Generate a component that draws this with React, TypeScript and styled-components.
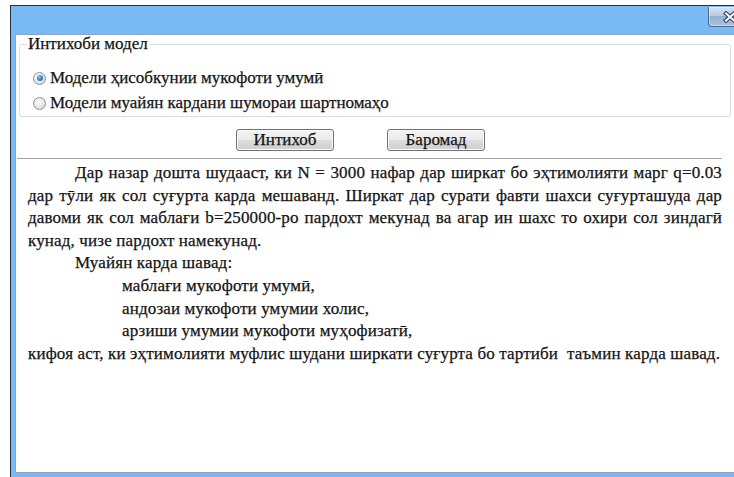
import styled, { createGlobalStyle } from "styled-components";

const GlobalStyle = createGlobalStyle`
  html, body {
    margin: 0;
    padding: 0;
    background: #ffffff;
    overflow: hidden;
  }
  body {
    width: 734px;
    height: 477px;
    font-family: "Liberation Serif", "DejaVu Serif", serif;
    font-size: 17px;
    color: #141414;
    -webkit-text-stroke: 0.25px #141414;
  }
`;

export default function App() {
  return (
    <>
      <GlobalStyle />
      <Window>
        <TitleBar>
          <CloseButton aria-label="Пӯшидан">
            <CloseGlyph />
          </CloseButton>
        </TitleBar>
        <Client>
          <ModelGroup>
            <Legend>Интихоби модел</Legend>
            <RadioRow>
              <Radio $checked />
              Модели ҳисобкунии мукофоти умумӣ
            </RadioRow>
            <RadioRow>
              <Radio />
              Модели муайян кардани шумораи шартномаҳо
            </RadioRow>
          </ModelGroup>
          <Actions>
            <PushButton>Интихоб</PushButton>
            <PushButton>Баромад</PushButton>
          </Actions>
          <TextPanel>
            <Line $indent={1} $full>
              Дар назар дошта шудааст, ки N = 3000 нафар дар ширкат бо эҳтимолияти марг q=0.03
            </Line>
            <Line $full>
              дар тӯли як сол суғурта карда мешаванд. Ширкат дар сурати фавти шахси суғурташуда дар
            </Line>
            <Line $full>
              давоми як сол маблағи b=250000-ро пардохт мекунад ва агар ин шахс то охири сол зиндагӣ
            </Line>
            <Line>кунад, чизе пардохт намекунад.</Line>
            <Line $indent={1}>Муайян карда шавад:</Line>
            <Line $indent={2}>маблағи мукофоти умумӣ,</Line>
            <Line $indent={2}>андозаи мукофоти умумии холис,</Line>
            <Line $indent={2}>арзиши умумии мукофоти муҳофизатӣ,</Line>
            <Line>
              кифоя аст, ки эҳтимолияти муфлис шудани ширкати суғурта бо тартиби{"\u00a0 "}таъмин карда шавад.
            </Line>
          </TextPanel>
        </Client>
      </Window>
    </>
  );
}

function CloseGlyph() {
  return (
    <svg width="14" height="12" viewBox="0 0 14 12">
      <path d="M3 2.5 L11 9.5 M11 2.5 L3 9.5" stroke="#33465f" strokeWidth="4.2" strokeLinecap="square" fill="none" />
      <path d="M3 2.5 L11 9.5 M11 2.5 L3 9.5" stroke="#ffffff" strokeWidth="2" strokeLinecap="square" fill="none" />
    </svg>
  );
}

const Window = styled.div`
  margin: 5px 0 0 10px;
  width: 750px;
  height: 480px;
  box-sizing: border-box;
  border: 1px solid #23303d;
  background: #79b9f4;
  padding: 0 4px 0 4px;
  display: flex;
  flex-direction: column;
`;

const TitleBar = styled.div`
  height: 28px;
  flex: none;
  display: flex;
  justify-content: flex-end;
  align-items: flex-start;
`;

const CloseButton = styled.button`
  width: 43px;
  height: 20px;
  margin: 1px 4px 0 0;
  padding: 0;
  box-sizing: border-box;
  border: 1px solid #4b6687;
  border-top: none;
  border-radius: 0 0 4px 4px;
  background: linear-gradient(#d7e2ef 0%, #b9cce3 45%, #93b0d3 50%, #a9c1de 100%);
  box-shadow: inset 0 0 0 1px rgba(255, 255, 255, 0.45);
  display: flex;
  align-items: center;
  justify-content: center;
`;

const Client = styled.div`
  flex: none;
  height: 439px;
  box-sizing: border-box;
  border: 1px solid #8ea4bf;
  background: #ffffff;
  display: flex;
  flex-direction: column;
`;

const ModelGroup = styled.fieldset`
  margin: 0 2px 0 3px;
  width: 712px;
  height: 82px;
  box-sizing: border-box;
  padding: 2px 6px 0 13px;
  border: 1px solid #d6dfe6;
  border-radius: 3px;
  display: flex;
  flex-direction: column;
  gap: 7px;
`;

const Legend = styled.legend`
  padding: 0 1px;
  margin-left: -6px;
  font-family: "Liberation Serif", "DejaVu Serif", serif;
  font-size: 17px;
  line-height: 18px;
  color: #141414;
`;

const RadioRow = styled.label`
  display: flex;
  align-items: center;
  gap: 4px;
  height: 18px;
  font-family: "Liberation Serif", "DejaVu Serif", serif;
  font-size: 17px;
  color: #141414;
  &:first-of-type {
    margin-top: 14px;
  }
`;

const Radio = styled.span<{ $checked?: boolean }>`
  position: relative;
  width: 13px;
  height: 13px;
  box-sizing: border-box;
  border-radius: 50%;
  border: 1px solid #8c8f94;
  background: radial-gradient(circle at 40% 35%, #fbfbfb 0%, #e6e6e6 55%, #cfd1d4 100%);
  flex: none;
  &::after {
    content: "";
    display: ${(p) => (p.$checked ? "block" : "none")};
    position: absolute;
    left: 2.5px;
    top: 2.5px;
    width: 6px;
    height: 6px;
    border-radius: 50%;
    background: radial-gradient(circle at 40% 35%, #8fc7f5 0%, #2f78c0 60%, #1f5b98 100%);
  }
`;

const Actions = styled.div`
  height: 41px;
  flex: none;
  box-sizing: border-box;
  padding: 12px 0 0 220px;
  display: flex;
  gap: 53px;
`;

const PushButton = styled.button`
  width: 98px;
  height: 22px;
  padding: 0;
  box-sizing: border-box;
  border: 1px solid #707070;
  border-radius: 3px;
  background: linear-gradient(#f2f2f2 0%, #ebebeb 50%, #dddddd 50%, #cfcfcf 100%);
  box-shadow: inset 0 0 0 1px #fbfbfb;
  font-family: "Liberation Serif", "DejaVu Serif", serif;
  font-size: 17px;
  color: #141414;
  -webkit-text-stroke: 0.25px #141414;
  line-height: 18px;
`;

const TextPanel = styled.div`
  flex: 1;
  border-top: 1px solid #a3a3a3;
  margin-left: 1px;
  padding: 3px 0 0 11px;
  width: 694px;
`;

const Line = styled.div<{ $indent?: number; $full?: boolean }>`
  font-family: "Liberation Serif", "DejaVu Serif", serif;
  font-size: 17px;
  letter-spacing: 0.15px;
  line-height: 22.6px;
  height: 22.6px;
  white-space: ${(p) => (p.$full ? "normal" : "nowrap")};
  color: #141414;
  padding-left: ${(p) => (p.$indent ?? 0) * 47}px;
  text-align: ${(p) => (p.$full ? "justify" : "left")};
  text-align-last: ${(p) => (p.$full ? "justify" : "auto")};
`;
